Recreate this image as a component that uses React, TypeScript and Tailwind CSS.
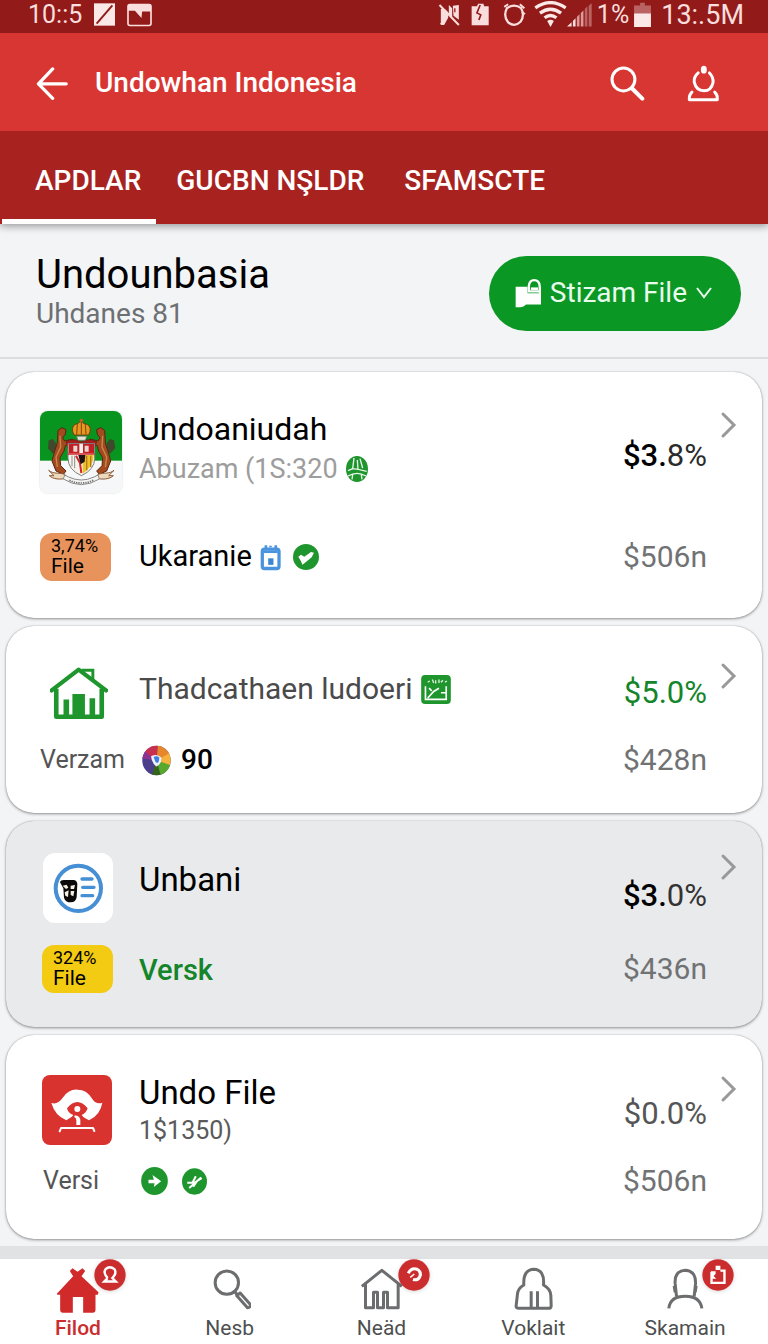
import type { ReactNode } from 'react';
import clsx from 'clsx';

function CrestLogo() {
  return (
    <svg viewBox="0 0 246 246" className="size-[82px] rounded-lg shadow-[0_0_2px_#0003]" aria-hidden="true">
      <rect width="246" height="246" fill="#f6f7f8" />
      <rect width="246" height="149" fill="#07951f" />
      {/* side wings */}
      <path d="M26 88 L38 84 L48 96 L50 118 L38 128 L24 112 Z" fill="#3f4a2c" />
      <path d="M222 88 L210 84 L200 96 L198 118 L210 128 L226 112 Z" fill="#3f4a2c" />
      {/* supporters */}
      <g fill="#a34a1f" stroke="#5a2512" strokeWidth="3">
        <path d="M54 58 L66 50 L78 56 L76 70 L68 80 L74 90 L98 84 L102 94 L76 104 L72 120 L60 140 L62 164 L78 180 L70 190 L48 180 L36 150 L44 120 L52 96 Z" />
        <path d="M194 58 L182 50 L170 56 L172 70 L180 80 L174 90 L150 84 L146 94 L172 104 L176 120 L188 140 L186 164 L170 180 L178 190 L200 180 L212 150 L204 120 L196 96 Z" />
      </g>
      <g fill="none" stroke="#c98a4e" strokeWidth="4">
        <path d="M60 74 L62 108 L48 138 L52 168" />
        <path d="M188 74 L186 108 L200 138 L196 168" />
      </g>
      {/* scroll ends */}
      <g fill="#efd9bd" stroke="#8a5a35" strokeWidth="3">
        <path d="M26 178 C40 190 56 184 74 190 L82 200 C62 208 38 204 28 194 L42 194 Z" />
        <path d="M222 178 C208 190 192 184 174 190 L166 200 C186 208 210 204 220 194 L206 194 Z" />
      </g>
      {/* mantling and crown */}
      <path d="M78 92 Q100 80 124 92 Q148 80 170 92 L164 112 L84 112 Z" fill="#a51d1d" stroke="#5a2512" strokeWidth="2" />
      <path d="M98 62 Q94 40 114 38 Q122 26 132 38 Q154 40 150 62 L146 72 L102 72 Z" fill="#e39a1e" stroke="#7a3d0e" strokeWidth="3" />
      <path d="M112 40 L110 70 M124 28 L124 70 M136 40 L138 70" stroke="#8f3d10" strokeWidth="3" />
      <circle cx="124" cy="28" r="5" fill="#d8582a" />
      <path d="M110 76 H140 L136 88 H114 Z" fill="#e9e2d2" stroke="#777" strokeWidth="2" />
      {/* shield */}
      <path d="M84 98 H164 V142 Q164 176 124 194 Q84 176 84 142 Z" fill="#f7f4ee" stroke="#7c7c7c" strokeWidth="3" />
      <path d="M86 99 H162 V127 H86 Z" fill="#c51f26" />
      <path d="M100 104 H112 V122 H100 Z M134 104 H146 V122 H134 Z" fill="#e8d8d2" />
      <path d="M118 98 H129 V127 H118 Z" fill="#f6f1ea" />
      <path d="M84 129 H164" stroke="#d3262c" strokeWidth="5" />
      <path d="M128 132 H161 Q162 166 128 188 Z" fill="#ecc22b" />
      <path d="M140 134 V178 M152 134 V168" stroke="#b9771c" strokeWidth="4" />
      <path d="M96 134 V166 M104 134 V172" stroke="#8d8d8d" strokeWidth="3" />
      <path d="M108 134 L120 156 L124 186" stroke="#d3262c" strokeWidth="6" fill="none" />
      <path d="M115 132 H136 L134 152 L122 160 Z" fill="#1e1212" />
      {/* motto ribbon */}
      <path d="M74 192 L86 198 Q124 216 162 198 L174 192 L178 204 Q124 238 70 204 Z" fill="#f4f4f2" stroke="#8a8a8a" strokeWidth="3" />
      <path d="M88 208 Q124 224 160 208" stroke="#6f6f6f" strokeWidth="5" strokeDasharray="4 3" fill="none" />
    </svg>
  );
}

function HouseLogo() {
  return (
    <svg viewBox="150 140 176 162" className="ml-[10px] h-[54px] w-[58px]" aria-hidden="true">
      <path d="M155 213 L237 150 L320 213" fill="none" stroke="#1f962d" strokeWidth="13" strokeLinecap="round" strokeLinejoin="round" />
      <path d="M246 152 H280 V182" fill="none" stroke="#1f962d" strokeWidth="9" />
      <path d="M169 208 V293 H307 V208" fill="none" stroke="#1f962d" strokeWidth="14" strokeLinejoin="round" />
      <path d="M191 241 H208 V288 H191 Z M218 224 H256 V290 H218 Z M270 237 H287 V288 H270 Z" fill="#1f962d" />
    </svg>
  );
}

function UnbaniLogo() {
  return (
    <svg viewBox="130 114 208 210" className="ml-[3px] size-[70px] rounded-xl bg-white" aria-hidden="true">
      <circle cx="235" cy="220" r="68" fill="none" stroke="#468fd4" strokeWidth="12" />
      <path d="M246 192 H276 M248 217 H282 M246 242 H278" stroke="#468fd4" strokeWidth="10" strokeLinecap="round" />
      <path d="M180 202 Q182 194 194 195 L222 195 Q232 197 232 208 L230 246 Q228 262 212 262 Q196 262 192 248 L190 220 Z" fill="#0c0a08" />
      <path d="M188 212 L200 209 L205 218 L198 222 Z M212 212 L225 210 L222 222 L212 222 Z M194 232 L206 226 L204 246 L196 242 Z M212 228 L223 228 L220 244 L212 240 Z" fill="#f4efdf" />
    </svg>
  );
}

function HatLogo() {
  return (
    <svg viewBox="127 136 206 210" className="ml-[2px] size-[70px] rounded-lg bg-[#d93330]" aria-hidden="true">
      <path d="M153 220 Q172 226 186 206 Q204 178 232 180 Q260 180 276 208 Q288 226 306 219 Q300 256 266 272 L252 264 Q242 256 231 256 Q220 256 210 264 L198 272 Q164 258 153 220 Z" fill="#fff" />
      <path d="M200 236 Q231 198 262 236 Q256 252 244 256 L252 266 H212 L219 256 Q204 252 200 236 Z" fill="#d93330" />
      <circle cx="231" cy="238" r="9" fill="#fff" />
      <path d="M222 258 Q236 256 240 270 V286 H228 V272 Q228 264 222 262 Z" fill="#fff" />
      <path d="M178 305 L182 295 H278 L282 304" fill="none" stroke="#fff" strokeWidth="6" strokeLinecap="round" strokeLinejoin="round" />
    </svg>
  );
}

function GlobeMark() {
  return (
    <svg viewBox="0 0 66 78" className="h-[26px] w-[22px]" aria-hidden="true">
      <ellipse cx="33" cy="39" rx="33" ry="39" fill="#1f962d" />
      <path d="M24 6 L20 38 L6 44 M34 12 L36 40 L62 46 M20 38 L36 40 M6 60 Q33 44 60 60 M18 70 L20 56 M48 70 L46 56 M42 8 L50 36" fill="none" stroke="#e9f6ea" strokeWidth="4" />
    </svg>
  );
}

function LockMark() {
  return (
    <svg viewBox="776 520 64 84" className="h-[28px] w-[21px]" aria-hidden="true">
      <path d="M794 536 V526 M808 532 V528 M824 538 V526" stroke="#4a94dd" strokeWidth="8" />
      <rect x="783" y="538" width="51" height="59" rx="7" fill="#fff" stroke="#4a94dd" strokeWidth="10" />
      <path d="M788 546 H830" stroke="#4a94dd" strokeWidth="8" />
      <rect x="801" y="566" width="16" height="20" fill="#3d86d3" />
    </svg>
  );
}

function CheckMark() {
  return (
    <svg viewBox="0 0 78 78" className="size-[26px]" aria-hidden="true">
      <circle cx="39" cy="39" r="39" fill="#1f962d" />
      <path d="M16 38 L24 32 L34 38 L54 24 L63 26 L56 40 L36 56 L28 62 L24 52 Z" fill="#fff" />
    </svg>
  );
}

function ChartMark() {
  return (
    <svg viewBox="0 0 90 88" className="h-[29px] w-[30px]" aria-hidden="true">
      <rect width="90" height="88" rx="12" fill="#1f962d" />
      <path d="M20 22 L26 18 M34 14 L38 24 M44 16 V26 M54 14 V24 M60 22 L66 16 M72 22 L78 18" stroke="#dff2e1" strokeWidth="4" />
      <path d="M13 34 V74 H76 V34 M20 70 L38 50 L54 40 M24 40 L32 48 M60 54 H74" fill="none" stroke="#fff" strokeWidth="5" />
    </svg>
  );
}

function ColorWheel() {
  return (
    <svg viewBox="0 0 90 94" className="h-[31px] w-[29px]" aria-hidden="true">
      <defs>
        <clipPath id="wheel">
          <ellipse cx="45" cy="47" rx="44" ry="46" />
        </clipPath>
      </defs>
      <g clipPath="url(#wheel)">
        <rect width="90" height="94" fill="#4b3f8c" />
        <path d="M45 47 L4 20 L20 -6 L50 -6 Z" fill="#c9304f" />
        <path d="M45 47 L50 -6 H90 L92 24 Z" fill="#e8862b" />
        <path d="M45 47 L92 20 V66 Z" fill="#f5b23c" />
        <path d="M45 47 L92 62 V100 H58 Z" fill="#57a82c" />
        <path d="M45 47 L60 100 H28 Z" fill="#34651f" />
        <path d="M45 47 L-4 40 L6 16 Z" fill="#8d3391" />
      </g>
      <path d="M28 34 Q46 24 60 38 Q62 58 44 66 Q30 54 28 34 Z" fill="#eef0fb" />
      <path d="M36 36 Q46 30 54 38 L52 50 Q48 58 42 52 Z" fill="#3f7fe0" />
    </svg>
  );
}

function ArrowMark() {
  return (
    <svg viewBox="0 0 80 84" className="h-[28px] w-[27px]" aria-hidden="true">
      <ellipse cx="40" cy="42" rx="40" ry="42" fill="#1f962d" />
      <path d="M22 38 H38 L34 24 L60 43 L38 60 L40 49 H22 Z" fill="#fff" />
    </svg>
  );
}

function SlashMark() {
  return (
    <svg viewBox="0 0 76 80" className="h-[27px] w-[25px]" aria-hidden="true">
      <ellipse cx="38" cy="40" rx="38" ry="40" fill="#1f962d" />
      <path d="M16 44 H32 L42 24 M22 60 L58 28 M34 56 L46 38 M34 46 L60 30" fill="none" stroke="#fff" strokeWidth="6" />
    </svg>
  );
}

type Line = { text: string; className: string; icon?: ReactNode };

type Entry = {
  id: string;
  card: string;
  top: string;
  logo: ReactNode;
  lines: Line[];
  percent: ReactNode;
  percentClass: string;
  left: ReactNode;
  detail: ReactNode;
  amount: string;
};

function FileBadge({ rate, className }: { rate: string; className: string }) {
  return (
    <div className={clsx('flex h-12 w-[71px] flex-col justify-center rounded-xl pb-[2px] pl-[11px] text-black', className)}>
      <span className="text-[18px] leading-5">{rate}</span>
      <span className="text-[21px] leading-5">File</span>
    </div>
  );
}

const ENTRIES: Entry[] = [
  {
    id: 'undoaniudah',
    card: 'bg-white pt-[39px] pb-[37px] gap-y-10',
    top: 'h-[82px] pb-[6px]',
    logo: <CrestLogo />,
    lines: [
      { text: 'Undoaniudah', className: 'text-[32px] leading-10 text-black' },
      { text: 'Abuzam (1S:320', className: 'text-[27px] leading-10 text-[#9d9d9d]', icon: <GlobeMark /> },
    ],
    percent: (
      <>
        <span className="font-medium text-black">$3.</span>8%
      </>
    ),
    percentClass: 'pt-2 text-[#2b2b2b]',
    left: <FileBadge rate="3,74%" className="bg-[#e8935c]" />,
    detail: (
      <>
        <span className="text-[29px] text-black">Ukaranie</span>
        <LockMark />
        <span className="pl-1">
          <CheckMark />
        </span>
      </>
    ),
    amount: '$506n',
  },
  {
    id: 'thadcathaen',
    card: 'bg-white pt-9 pb-[29px] gap-y-3',
    top: 'h-[62px] pb-2',
    logo: <HouseLogo />,
    lines: [{ text: 'Thadcathaen ludoeri', className: 'text-[30px] leading-10 text-[#4a4a4a]', icon: <ChartMark /> }],
    percent: '$5.0%',
    percentClass: 'text-[#14852a]',
    left: <span className="text-[25px] text-[#555]">Verzam</span>,
    detail: (
      <div className="flex items-center gap-[10px] pl-[3px]">
        <ColorWheel />
        <span className="text-[28px] font-medium text-black">90</span>
      </div>
    ),
    amount: '$428n',
  },
  {
    id: 'unbani',
    card: 'bg-[#e9eaec] pt-8 pb-[34px] gap-y-[22px]',
    top: 'h-[70px] pb-4',
    logo: <UnbaniLogo />,
    lines: [{ text: 'Unbani', className: 'text-[33px] leading-10 text-black' }],
    percent: (
      <>
        <span className="font-medium text-black">$3.</span>0%
      </>
    ),
    percentClass: 'pt-4 text-[#333]',
    left: <FileBadge rate="324%" className="ml-[2px] bg-[#f2cb12]" />,
    detail: <span className="pt-1 text-[29px] font-medium text-[#14852a]">Versk</span>,
    amount: '$436n',
  },
  {
    id: 'undo-file',
    card: 'bg-white pt-10 pb-[34px] gap-y-3',
    top: 'h-[70px] pt-[2px]',
    logo: <HatLogo />,
    lines: [
      { text: 'Undo File', className: 'text-[33px] leading-10 text-black' },
      { text: '1$1350)', className: 'text-[25px] leading-9 text-[#5a5a5a]' },
    ],
    percent: '$0.0%',
    percentClass: 'pt-2 text-[#555]',
    left: <span className="pl-[3px] text-[25px] text-[#555]">Versi</span>,
    detail: (
      <div className="flex items-center gap-[14px] pl-[2px]">
        <ArrowMark />
        <SlashMark />
      </div>
    ),
    amount: '$506n',
  },
];

function EntryCard({ entry }: { entry: Entry }) {
  return (
    <li
      className={clsx(
        'grid grid-cols-[99px_1fr_84px_55px] rounded-[28px] pl-[34px] shadow-[0_1px_3px_#0006,0_0_1px_#0005]',
        entry.card,
      )}
    >
      <div className="self-center">{entry.logo}</div>
      <div className={clsx('flex flex-col justify-center', entry.top)}>
        {entry.lines.map((line) => (
          <div key={line.text} className="flex items-center gap-2">
            <p className={clsx('whitespace-nowrap', line.className)}>{line.text}</p>
            {line.icon}
          </div>
        ))}
      </div>
      <p className={clsx('self-center text-right text-[31px] leading-9 whitespace-nowrap', entry.percentClass)}>
        {entry.percent}
      </p>
      <button type="button" aria-label="Open" className="ml-3 flex h-7 w-5 items-center justify-center self-start">
        <svg viewBox="0 0 18 28" className="h-7 w-[18px]" aria-hidden="true">
          <path d="M3 3 L14 14 L3 25" fill="none" stroke="#999" strokeWidth="3" strokeLinecap="round" />
        </svg>
      </button>

      <div className="flex h-12 items-center">{entry.left}</div>
      <div className="flex h-12 items-center gap-2 whitespace-nowrap">{entry.detail}</div>
      <p className="self-center text-right text-[30px] leading-9 text-[#707274]">{entry.amount}</p>
    </li>
  );
}

function StatusBar() {
  return (
    <div className="flex h-[33px] items-center justify-between bg-[#921b1a] pr-6 pb-1 pl-7 text-[25px] leading-7 text-[#f9dedd]">
      <div className="flex items-center gap-3">
        <span>10::5</span>
        <svg viewBox="0 0 64 68" className="h-[23px] w-[21px]" aria-hidden="true">
          <rect width="64" height="68" fill="#fbe9e8" />
          <path d="M8 62 L56 6" stroke="#921b1a" strokeWidth="6" />
        </svg>
        <svg viewBox="0 0 76 70" className="h-[24px] w-[25px]" aria-hidden="true">
          <rect x="3" y="3" width="70" height="64" rx="6" fill="none" stroke="#f9dedd" strokeWidth="5" />
          <path d="M3 3 H73 V24 H46 L44 44 L24 22 H3 Z" fill="#f9dedd" />
        </svg>
      </div>
      <div className="flex items-center">
        <svg viewBox="160 6 68 72" className="mr-[10px] h-6 w-[23px]" aria-hidden="true">
          <path d="M168 24 H180 L190 34 V50 L178 72 H168 Z M192 12 L202 22 V50 L192 40 Z M204 14 L222 12 V56 L206 44 Z" fill="#f9dedd" />
          <path d="M164 12 L222 72 M168 70 L186 48" stroke="#f9dedd" strokeWidth="6" />
          <path d="M210 22 V34" stroke="#921b1a" strokeWidth="4" />
        </svg>
        <svg viewBox="260 6 58 70" className="mr-3 h-[23px] w-[19px]" aria-hidden="true">
          <path d="M262 16 H278 L282 8 H298 L300 16 H314 V74 H262 Z" fill="#f9dedd" />
          <path d="M288 12 L278 36 L290 42 L284 58" stroke="#921b1a" strokeWidth="5" fill="none" />
        </svg>
        <svg viewBox="350 6 72 74" className="mr-[8px] h-[24px] w-[24px]" aria-hidden="true">
          <path d="M364 22 Q386 6 408 22 Q420 44 406 64 Q388 82 368 66 Q352 46 364 22 Z" fill="none" stroke="#f9dedd" strokeWidth="7" />
          <path d="M356 18 L368 10 M404 10 L418 22 M410 34 L420 40" stroke="#f9dedd" strokeWidth="6" />
        </svg>
        <svg viewBox="448 2 100 80" className="h-[27px] w-[33px]" aria-hidden="true">
          <path d="M452 22 Q498 -10 544 22 M466 38 Q498 14 530 38 M480 52 Q498 38 516 52" fill="none" stroke="#fbe9e8" strokeWidth="10" />
          <path d="M488 62 Q498 54 508 62 L498 80 Z" fill="#fbe9e8" />
        </svg>
        <svg viewBox="552 4 76 72" className="mr-[5px] h-6 w-[25px]" aria-hidden="true">
          <path d="M552 75 L566 62 V75 Z M570 58 L578 50 V75 H570 Z" fill="#f9dedd" />
          <path d="M582 46 L590 38 V75 H582 Z M594 34 L602 26 V75 H594 Z" fill="#dd9a98" />
          <path d="M606 22 L614 14 V75 H606 Z M618 12 L627 4 V75 H618 Z" fill="#b96463" />
        </svg>
        <span>1%</span>
        <svg viewBox="0 0 50 74" className="mr-[10px] ml-[5px] h-[25px] w-[17px]" aria-hidden="true">
          <path d="M18 2 H32 V10 H50 V36 H0 V10 H18 Z" fill="#b96463" />
          <rect y="34" width="50" height="40" fill="#fbe9e8" />
        </svg>
        <span className="text-[27px]">13:.5M</span>
      </div>
    </div>
  );
}

const TABS = [
  { label: 'APDLAR', className: 'border-white pr-[15px] pl-[33px]' },
  { label: 'GUCBN NŞLDR', className: 'border-transparent px-5' },
  { label: 'SFAMSCTE', className: 'border-transparent px-5' },
];

function TopBar() {
  return (
    <header className="relative text-white shadow-[0_2px_8px_#0006]">
      <StatusBar />
      <div className="flex h-[98px] items-center bg-[#d83632] pt-[2px] pr-12 pl-9">
        <button type="button" aria-label="Back">
          <svg viewBox="105 200 96 100" className="h-[33px] w-8" aria-hidden="true">
            <path d="M155 206 L112 251 L155 295 M113 251 H196" fill="none" stroke="#fff" strokeWidth="10" strokeLinecap="round" strokeLinejoin="round" />
          </svg>
        </button>
        <h1 className="flex-1 pl-[27px] text-[28px] font-medium">Undowhan Indonesia</h1>
        <button type="button" aria-label="Search" className="mr-[42px]">
          <svg viewBox="676 198 104 104" className="size-[35px]" aria-hidden="true">
            <circle cx="716" cy="238" r="34" fill="none" stroke="#fff" strokeWidth="9" />
            <path d="M741 264 L772 295" stroke="#fff" strokeWidth="12" strokeLinecap="round" />
          </svg>
        </button>
        <button type="button" aria-label="Account">
          <svg viewBox="906 192 100 112" className="h-[37px] w-[33px]" aria-hidden="true">
            <path d="M940 216 Q926 228 928 244 Q934 270 957 270 Q980 270 985 244 Q986 228 974 216" fill="none" stroke="#fff" strokeWidth="9" strokeLinecap="round" />
            <ellipse cx="957" cy="206" rx="9" ry="12" fill="#fff" />
            <path d="M921 274 Q912 282 913 297 H998 Q999 282 990 274" fill="none" stroke="#fff" strokeWidth="9" strokeLinecap="round" strokeLinejoin="round" />
          </svg>
        </button>
      </div>
      <div role="tablist" className="flex h-[93px] bg-[#a82320] pl-[2px]">
        {TABS.map((tab, i) => (
          <button
            key={tab.label}
            type="button"
            role="tab"
            aria-selected={i === 0}
            className={clsx('border-b-[5px] pt-3 text-[28px] font-medium whitespace-nowrap', tab.className)}
          >
            {tab.label}
          </button>
        ))}
      </div>
    </header>
  );
}

function NavBadge({ children }: { children: ReactNode }) {
  return (
    <svg viewBox="0 0 94 94" className="absolute -top-2 left-[38px] size-8 drop-shadow-sm" aria-hidden="true">
      <circle cx="47" cy="47" r="46" fill="#cb2c2d" />
      {children}
    </svg>
  );
}

const NAV_ITEMS = [
  {
    label: 'Filod',
    icon: (
      <svg viewBox="165 84 128 138" className="h-[46px] w-[43px]" aria-hidden="true">
        <path d="M167 164 L216 112 L206 96 L214 88 L229 98 L244 88 L252 96 L241 112 L292 160 L290 167 H283 V214 Q283 221 276 221 H246 V174 H215 V221 H184 Q177 221 177 214 V167 H168 Z" fill="#d12a2b" />
      </svg>
    ),
    badge: (
      <path d="M40 56 Q26 40 34 30 Q46 18 60 30 Q68 42 54 56 L64 66 H30 L40 56" fill="none" stroke="#fff" strokeWidth="7" />
    ),
  },
  {
    label: 'Nesb',
    icon: (
      <svg viewBox="614 84 128 138" className="h-[46px] w-[43px]" aria-hidden="true">
        <circle cx="670" cy="131" r="35" fill="none" stroke="#6b6d6e" strokeWidth="9" />
        <path d="M692 156 L702 168" stroke="#6b6d6e" strokeWidth="10" />
        <path d="M700 170 L710 162 L740 196 Q742 206 732 206 Z" fill="#fff" stroke="#6b6d6e" strokeWidth="9" strokeLinejoin="round" />
      </svg>
    ),
  },
  {
    label: 'Neäd',
    icon: (
      <svg viewBox="0 0 128 138" className="h-[46px] w-[43px]" aria-hidden="true">
        <path d="M5 58 L65 10 L125 58 M16 52 V122 H40 V76 H52 V122 H70 V76 H82 V122 H114 V52" fill="none" stroke="#6b6d6e" strokeWidth="9" strokeLinejoin="round" />
      </svg>
    ),
    badge: (
      <>
        <path d="M30 42 Q40 24 56 30 Q70 38 64 52 Q58 64 44 60" fill="none" stroke="#fff" strokeWidth="9" />
        <path d="M36 54 L48 44" stroke="#fff" strokeWidth="4" />
      </>
    ),
  },
  {
    label: 'Voklait',
    icon: (
      <svg viewBox="384 84 128 138" className="h-[46px] w-[43px]" aria-hidden="true">
        <path d="M419 138 Q416 92 449 91 Q482 92 478 138 Q500 150 500 170 L501 200 Q501 208 492 208 H404 Q395 208 396 200 L400 164 Q402 148 419 138 Z" fill="none" stroke="#6b6d6e" strokeWidth="9" strokeLinejoin="round" />
        <path d="M441 157 V206 M460 157 V206" stroke="#6b6d6e" strokeWidth="9" />
      </svg>
    ),
  },
  {
    label: 'Skamain',
    icon: (
      <svg viewBox="840 84 128 138" className="h-[46px] w-[43px]" aria-hidden="true">
        <path d="M877 172 L873 134 Q870 96 903 94 Q936 96 934 134 L930 172 M870 140 L873 160 M936 140 L933 160" fill="none" stroke="#6b6d6e" strokeWidth="9" />
        <path d="M854 208 Q858 172 903 172 Q948 172 953 208" fill="none" stroke="#6b6d6e" strokeWidth="9" />
      </svg>
    ),
    badge: (
      <>
        <path d="M28 38 V70 H66 V34 H54" fill="none" stroke="#fff" strokeWidth="7" />
        <path d="M40 20 H54 V32 H40 Z M26 36 H40 V44 L34 50 L42 58 H28 Z" fill="#fff" />
      </>
    ),
  },
];

function BottomNav() {
  return (
    <nav className="grid grid-cols-5 border-t-[13px] border-[#e1e2e4] bg-white pt-2 pr-[7px] pb-1 pl-[2px]">
      {NAV_ITEMS.map((item, i) => (
        <a
          key={item.label}
          href="#"
          className={clsx(
            'flex flex-col items-center text-[21px]',
            i === 0 ? 'font-medium text-[#cb2c2d]' : 'text-[#4d4f50]',
          )}
        >
          <span className="relative h-[49px]">
            {item.icon}
            {item.badge && <NavBadge>{item.badge}</NavBadge>}
          </span>
          <span className="leading-6">{item.label}</span>
        </a>
      ))}
    </nav>
  );
}

export default function App() {
  return (
    <div className="flex min-h-screen flex-col bg-[#f3f4f6] font-[Roboto,sans-serif]">
      <TopBar />

      <section className="flex items-center justify-between border-b-2 border-[#dcddde] pt-[29px] pr-[27px] pb-6 pl-9">
        <div className="pt-[2px]">
          <h2 className="text-[40px] leading-10 text-black">Undounbasia</h2>
          <p className="text-[28px] leading-[38px] text-[#6d7073]">Uhdanes 81</p>
        </div>
        <button
          type="button"
          className="flex h-[75px] items-center rounded-full bg-[#0a9724] pr-7 pl-[26px] text-[28px] text-[#e9fbec]"
        >
          <svg viewBox="134 112 82 90" className="h-[30px] w-[27px]" aria-hidden="true">
            <path d="M136 138 H172 V158 H206 V140 H213 V192 H168 Q160 200 150 200 H136 Z" fill="#fff" />
            <path d="M176 152 V136 Q178 118 192 118 Q208 118 209 136 V152 Z" fill="#0a9724" stroke="#fff" strokeWidth="7" />
            <path d="M182 144 H204" stroke="#fff" strokeWidth="8" />
          </svg>
          <span className="px-2 whitespace-nowrap">Stizam File</span>
          <svg viewBox="0 0 18 14" className="h-[14px] w-[18px]" aria-hidden="true">
            <path d="M2 2 L9 11 L16 2" fill="none" stroke="#e9fbec" strokeWidth="2" />
          </svg>
        </button>
      </section>

      <main className="flex-1 px-[6px] pt-[13px] pb-[7px]">
        <ul className="flex flex-col gap-2">
          {ENTRIES.map((entry) => (
            <EntryCard key={entry.id} entry={entry} />
          ))}
        </ul>
      </main>

      <BottomNav />
    </div>
  );
}
